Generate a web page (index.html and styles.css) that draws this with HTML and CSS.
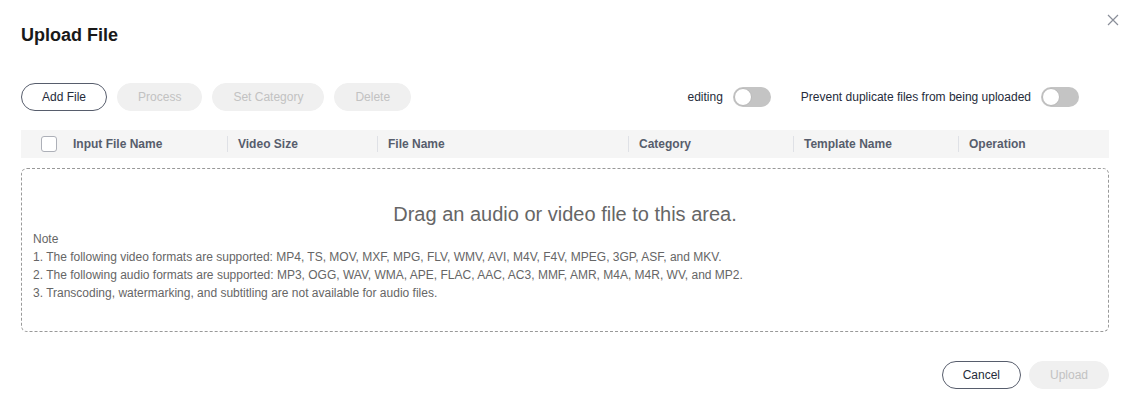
FILE: index.html
```html
<!DOCTYPE html>
<html>
<head>
<meta charset="utf-8">
<link rel="stylesheet" href="styles.css">
</head>
<body>
<div class="dialog">
  <button class="close" aria-label="Close">
    <svg width="12" height="12" viewBox="0 0 12 12"><path d="M1 1L11 11M11 1L1 11" stroke="#8a8e99" stroke-width="1.2" fill="none"/></svg>
  </button>
  <h1 class="title">Upload File</h1>
  <div class="toolbar">
    <div class="actions">
      <button class="btn">Add File</button>
      <button class="btn disabled">Process</button>
      <button class="btn disabled">Set Category</button>
      <button class="btn disabled">Delete</button>
    </div>
    <div class="switches">
      <label class="switch-item">editing <span class="toggle"><span class="thumb"></span></span></label>
      <label class="switch-item">Prevent duplicate files from being uploaded <span class="toggle"><span class="thumb"></span></span></label>
    </div>
  </div>
  <div class="thead">
    <div class="th c1"><span class="checkbox"></span>Input File Name</div>
    <div class="th c2">Video Size</div>
    <div class="th c3">File Name</div>
    <div class="th c4">Category</div>
    <div class="th c5">Template Name</div>
    <div class="th c6">Operation</div>
  </div>
  <div class="dropzone">
    <div class="drag">Drag an audio or video file to this area.</div>
    <div class="note">
      <div>Note</div>
      <div>1. The following video formats are supported: MP4, TS, MOV, MXF, MPG, FLV, WMV, AVI, M4V, F4V, MPEG, 3GP, ASF, and MKV.</div>
      <div>2. The following audio formats are supported: MP3, OGG, WAV, WMA, APE, FLAC, AAC, AC3, MMF, AMR, M4A, M4R, WV, and MP2.</div>
      <div>3. Transcoding, watermarking, and subtitling are not available for audio files.</div>
    </div>
  </div>
  <div class="footer">
    <button class="btn">Cancel</button>
    <button class="btn disabled wide">Upload</button>
  </div>
</div>
</body>
</html>
```
FILE: styles.css
```css
* { box-sizing: border-box; }
html, body { margin: 0; padding: 0; background: #fff; }
body { font-family: "Liberation Sans", Arial, sans-serif; color: #252b3a; }
.dialog { position: relative; width: 1134px; height: 416px; padding: 23px 25px 0 21px; }
.close { position: absolute; top: 14px; right: 15px; width: 12px; height: 12px; padding: 0; border: 0; background: none; display: flex; }
.title { margin: 0; font-size: 18px; line-height: 24px; font-weight: bold; color: #191919; }
.toolbar { display: flex; justify-content: space-between; align-items: center; margin-top: 36px; height: 28px; }
.actions { display: flex; gap: 10px; }
.btn { height: 28px; padding: 0 20px; border: 1px solid #575d6c; border-radius: 14px; background: #fff; font-family: inherit; font-size: 12px; color: #252b3a; line-height: 26px; }
.btn.disabled { border-color: #f0f0f0; background: #f0f0f0; color: #c2c2c2; }
.switches { display: flex; align-items: center; gap: 30px; padding-right: 30px; }
.switch-item { display: flex; align-items: center; gap: 10px; font-size: 12px; color: #252b3a; }
.toggle { width: 38px; height: 20px; border-radius: 10px; background: #c4c4c4; display: flex; align-items: center; padding: 1px; }
.thumb { width: 18px; height: 18px; border-radius: 50%; background: #fff; border: 1px solid #b8b8b8; }
.thead { display: flex; align-items: center; margin-top: 19px; height: 28px; background: #f5f5f5; }
.th { position: relative; display: flex; align-items: center; height: 28px; padding-left: 11px; font-size: 12px; font-weight: bold; color: #575d6c; }
.th + .th::before { content: ""; position: absolute; left: 0; top: 6px; width: 1px; height: 16px; background: #dfe1e6; }
.c1 { width: 206px; padding-left: 20px; }
.c2 { width: 150px; }
.c3 { width: 251px; }
.c4 { width: 165px; }
.c5 { width: 165px; }
.c6 { flex: 1; }
.checkbox { width: 16px; height: 16px; border: 1px solid #adb0b8; border-radius: 3px; background: #fff; margin-right: 16px; }
.dropzone { margin-top: 10px; height: 164px; border: 1px dashed #999; border-radius: 6px; padding: 33px 11px 0; }
.drag { text-align: center; font-size: 20px; line-height: 24px; color: #666; }
.note { margin-top: 4px; font-size: 12px; line-height: 18px; color: #666; }
.footer { display: flex; justify-content: flex-end; gap: 8px; margin-top: 29px; }
.wide { width: 80px; padding: 0; }
```
